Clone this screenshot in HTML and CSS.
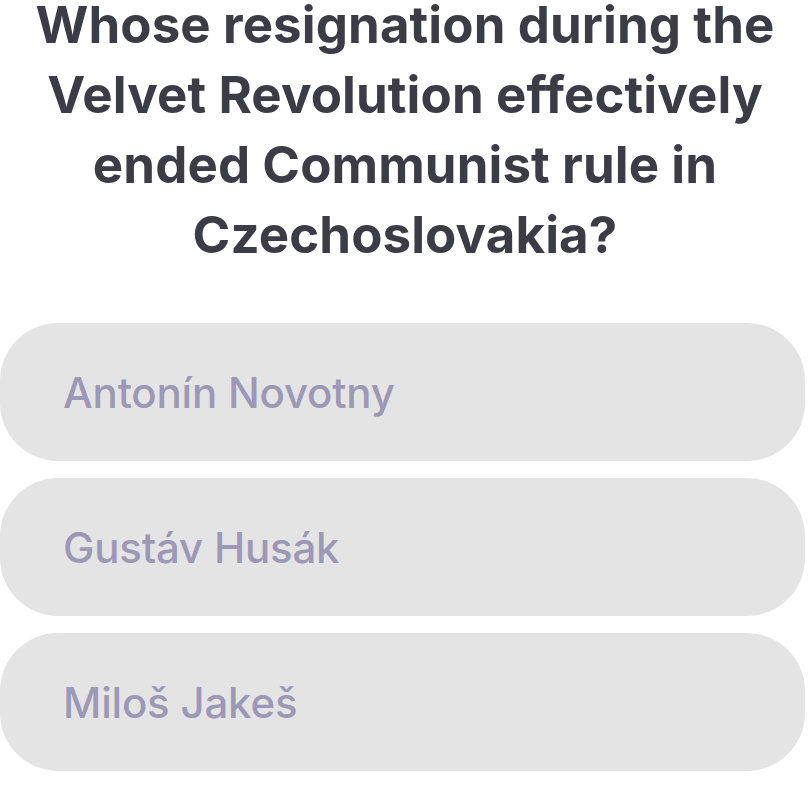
FILE: index.html
```html
<!DOCTYPE html>
<html lang="en">
<head>
<meta charset="utf-8">
<title>Quiz</title>
<link rel="stylesheet" href="styles.css">
</head>
<body>
<main class="quiz">
  <h1 class="question">Whose resignation during the Velvet Revolution effectively ended Communist rule in Czechoslovakia?</h1>
  <ul class="answers">
    <li class="answer">Antonín Novotny</li>
    <li class="answer">Gustáv Husák</li>
    <li class="answer">Miloš Jakeš</li>
  </ul>
</main>
</body>
</html>
```
FILE: styles.css
```css
html, body {
  margin: 0;
  padding: 0;
  background: #ffffff;
}
.quiz {
  width: 810px;
  display: flex;
  flex-direction: column;
}
.question {
  margin: 0;
  padding: 6px 20px 0 20px;
  font-family: Inter, "Noto Sans", sans-serif;
  font-weight: 700;
  font-size: 51px;
  line-height: 70px;
  letter-spacing: 0.1px;
  color: #3c3c46;
  text-align: center;
  text-box: trim-start cap alphabetic;
}
.answers {
  list-style: none;
  margin: 53px 0 0 0;
  padding: 0;
  display: flex;
  flex-direction: column;
  gap: 17px;
}
.answer {
  width: 805px;
  height: 138px;
  box-sizing: border-box;
  border-radius: 58px;
  background: #e4e4e5;
  display: flex;
  align-items: center;
  padding-left: 63px;
  font-family: Inter, "Noto Sans", sans-serif;
  font-weight: 500;
  font-size: 42px;
  letter-spacing: -0.2px;
  color: #9c98b6;
}
```
